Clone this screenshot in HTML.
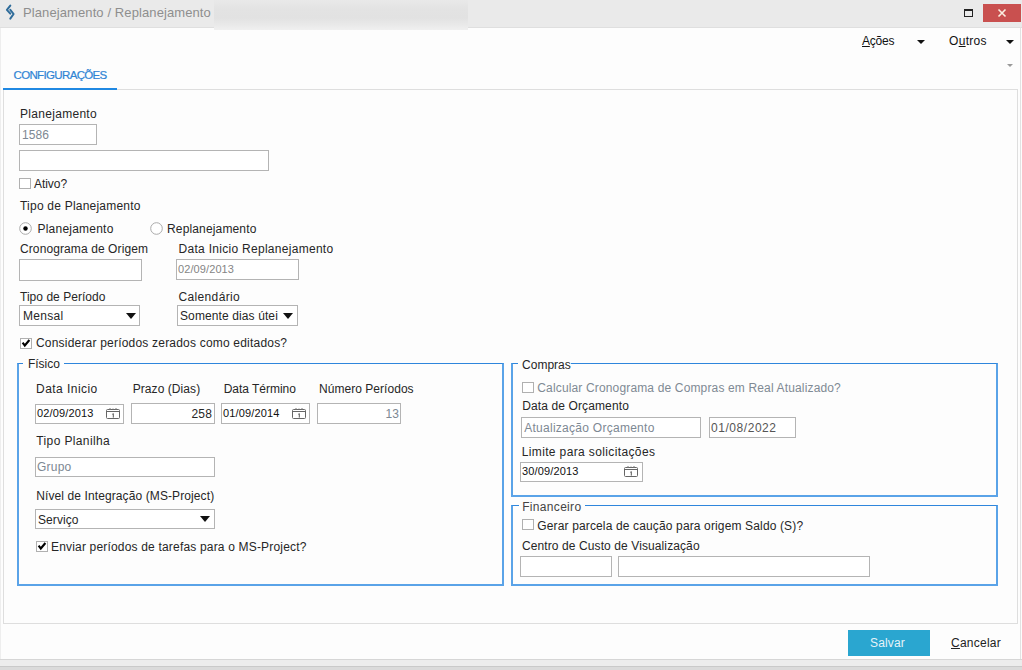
<!DOCTYPE html>
<html><head><meta charset="utf-8">
<style>
*{box-sizing:border-box;margin:0;padding:0}
html,body{width:1022px;height:670px;overflow:hidden;background:#fdfdfd;font-family:"Liberation Sans",sans-serif;font-size:12px;color:#262626}
.a{position:absolute}
.t{position:absolute;white-space:nowrap;line-height:14px}
.in{position:absolute;border:1px solid #b4b4b4;background:#fff}
.cb{position:absolute;width:12px;height:11px;border:1px solid #b0b0b0;background:#fff}
.grp{position:absolute;border:2px solid #5aa3e8;border-top:1px solid #2f86dc}
u{text-decoration:underline;text-underline-offset:1px}
</style></head><body>
<div class="a" style="left:0;top:0;width:1022px;height:28px;background:#eaeaea;border-bottom:1px solid #dfdfdf"></div>
<div class="a" style="left:214px;top:0;width:254px;height:30px;background:linear-gradient(#e9e9e9,#e3e3e3 30%,#e2e2e2 60%,#eaeaea 85%,#f0f0f0)"></div>
<svg class="a" style="left:0px;top:0px" width="20" height="24" viewBox="0 0 20 24"><path d="M10.3 5.6 L6.9 9.8 L10.3 13.6" fill="none" stroke="#2f6c9a" stroke-width="2" stroke-linecap="round" stroke-linejoin="round"/><path d="M10.3 9.8 L13.6 14 L10.3 18.6" fill="none" stroke="#2f6c9a" stroke-width="2" stroke-linecap="round" stroke-linejoin="round"/></svg>
<div class="t" style="left:23px;top:6px;font-size:13px;letter-spacing:0.1px;color:#8e8e8e;">Planejamento / Replanejamento</div>
<div class="a" style="left:964px;top:9px;width:9px;height:8px;border:1px solid #222;border-top-width:2px"></div>
<div class="a" style="left:983px;top:4px;width:38px;height:18px;background:#c9504f"></div>
<svg class="a" style="left:997px;top:8px" width="10" height="10"><path d="M1.5 1.5L8.5 8.5M8.5 1.5L1.5 8.5" stroke="#fbeee0" stroke-width="1.6"/></svg>
<div class="t" style="left:862px;top:34px;font-size:12px;letter-spacing:-0.2px;color:#111;"><u>A</u>ções</div>
<div class="a" style="left:917px;top:39.5px;width:0;height:0;border-left:4.0px solid transparent;border-right:4.0px solid transparent;border-top:4.5px solid #111"></div>
<div class="t" style="left:949px;top:34px;font-size:12px;letter-spacing:0.3px;color:#111;">O<u>u</u>tros</div>
<div class="a" style="left:1006px;top:39.5px;width:0;height:0;border-left:4.0px solid transparent;border-right:4.0px solid transparent;border-top:4.5px solid #111"></div>
<div class="a" style="left:1006.5px;top:64px;width:0;height:0;border-left:3.5px solid transparent;border-right:3.5px solid transparent;border-top:3.5px solid #999"></div>
<div class="t" style="left:13.5px;top:68.0px;font-size:11.5px;letter-spacing:-0.65px;color:#2f84d4;font-weight:normal;-webkit-text-stroke:0.2px #2f84d4;">CONFIGURAÇÕES</div>
<div class="a" style="left:3px;top:89px;width:1015px;height:535px;border:1px solid #dedede"></div>
<div class="a" style="left:3px;top:88px;width:114px;height:2px;background:#1f88e2"></div>
<div class="t" style="left:20px;top:107px;font-size:12px;letter-spacing:0.3px;">Planejamento</div>
<div class="in" style="left:19px;top:124px;width:78px;height:21px;"></div>
<div class="t" style="left:22px;top:128px;font-size:12px;letter-spacing:0.07px;color:#7d8893;">1586</div>
<div class="in" style="left:19px;top:150px;width:250px;height:21px;"></div>
<div class="cb" style="left:19px;top:178px"></div>
<div class="t" style="left:34px;top:177px;font-size:12px;letter-spacing:-0.05px;">Ativo?</div>
<div class="t" style="left:20px;top:199px;font-size:12px;letter-spacing:0.22px;">Tipo de Planejamento</div>
<svg class="a" style="left:19px;top:222px" width="13" height="13" viewBox="0 0 13 13"><circle cx="6.5" cy="6.5" r="5.8" fill="#fff" stroke="#aaa" stroke-width="1"/><circle cx="6.5" cy="6.5" r="2.2" fill="#000"/></svg>
<div class="t" style="left:37.5px;top:222px;font-size:12px;letter-spacing:0.22px;">Planejamento</div>
<svg class="a" style="left:150px;top:222px" width="13" height="13" viewBox="0 0 13 13"><circle cx="6.5" cy="6.5" r="5.8" fill="#fff" stroke="#aaa" stroke-width="1"/></svg>
<div class="t" style="left:167px;top:222px;font-size:12px;letter-spacing:0.15px;">Replanejamento</div>
<div class="t" style="left:20px;top:242px;font-size:12px;letter-spacing:0.1px;">Cronograma de Origem</div>
<div class="in" style="left:19px;top:259px;width:123px;height:22px;"></div>
<div class="t" style="left:178.5px;top:242px;font-size:12px;letter-spacing:0.29px;">Data Inicio Replanejamento</div>
<div class="in" style="left:176px;top:259px;width:123px;height:21px;"></div>
<div class="t" style="left:178px;top:261.5px;font-size:11px;letter-spacing:0.1px;color:#858585;">02/09/2013</div>
<div class="t" style="left:20px;top:290px;font-size:12px;letter-spacing:0.03px;">Tipo de Período</div>
<div class="in" style="left:19px;top:305px;width:121px;height:21px;"></div>
<div class="t" style="left:23px;top:309px;font-size:12px;letter-spacing:0.29px;">Mensal</div>
<div class="a" style="left:125.5px;top:313px;width:0;height:0;border-left:5.0px solid transparent;border-right:5.0px solid transparent;border-top:6px solid #111"></div>
<div class="t" style="left:178.5px;top:290px;font-size:12px;letter-spacing:0.35px;">Calendário</div>
<div class="in" style="left:177px;top:305px;width:121px;height:21px;"></div>
<div class="t" style="left:180px;top:309px;font-size:12px;letter-spacing:0.11px;">Somente dias útei</div>
<div class="a" style="left:283px;top:313px;width:0;height:0;border-left:5.0px solid transparent;border-right:5.0px solid transparent;border-top:6px solid #111"></div>
<div class="cb" style="left:20px;top:338px"></div><svg class="a" style="left:20px;top:338px" width="12" height="12" viewBox="0 0 12 12"><path d="M2.6 4.6 L4.8 7.5 L9.4 2.0" fill="none" stroke="#000" stroke-width="2.1"/></svg>
<div class="t" style="left:36px;top:336px;font-size:12px;letter-spacing:0.2px;">Considerar períodos zerados como editados?</div>
<div class="grp" style="left:17px;top:363px;width:487px;height:223px;"></div>
<div class="a" style="left:23px;top:362px;width:41px;height:3px;background:#fdfdfd"></div>
<div class="t" style="left:28px;top:357px;font-size:12px;letter-spacing:-0.04px;">Físico</div>
<div class="t" style="left:36px;top:381.5px;font-size:12px;letter-spacing:0.46px;">Data Inicio</div>
<div class="in" style="left:35px;top:404px;width:89px;height:20px;"></div>
<div class="t" style="left:37px;top:406px;font-size:11px;letter-spacing:0.15px;color:#111;">02/09/2013</div>
<svg class="a" style="left:106px;top:407px" width="15" height="13" viewBox="0 0 15 13"><rect x="0.5" y="2.5" width="13" height="9" rx="1" fill="#fff" stroke="#666" stroke-width="1"/><line x1="1" y1="4.5" x2="13" y2="4.5" stroke="#666" stroke-width="1"/><path d="M4 1v2M10 1v2M7 1.5v1" stroke="#777" stroke-width="1"/><path d="M6.3 7.3l1-0.7v4" fill="none" stroke="#555" stroke-width="1"/></svg>
<div class="t" style="left:132.7px;top:381.5px;font-size:12px;letter-spacing:0.07px;">Prazo (Dias)</div>
<div class="in" style="left:131px;top:403px;width:84px;height:21px;"></div>
<div class="t" style="left:191.5px;top:407px;font-size:12px;letter-spacing:0.19px;">258</div>
<div class="t" style="left:223.7px;top:381.5px;font-size:12px;letter-spacing:-0.02px;">Data Término</div>
<div class="in" style="left:221px;top:403px;width:89px;height:21px;"></div>
<div class="t" style="left:223px;top:406px;font-size:11px;letter-spacing:0.15px;color:#111;">01/09/2014</div>
<svg class="a" style="left:292px;top:406.5px" width="15" height="13" viewBox="0 0 15 13"><rect x="0.5" y="2.5" width="13" height="9" rx="1" fill="#fff" stroke="#666" stroke-width="1"/><line x1="1" y1="4.5" x2="13" y2="4.5" stroke="#666" stroke-width="1"/><path d="M4 1v2M10 1v2M7 1.5v1" stroke="#777" stroke-width="1"/><path d="M6.3 7.3l1-0.7v4" fill="none" stroke="#555" stroke-width="1"/></svg>
<div class="t" style="left:319px;top:381.5px;font-size:12px;letter-spacing:0.04px;">Número Períodos</div>
<div class="in" style="left:317px;top:403px;width:84px;height:21px;"></div>
<div class="t" style="left:385.5px;top:407px;font-size:12px;letter-spacing:0.1px;color:#7d8893;">13</div>
<div class="t" style="left:36.3px;top:433.5px;font-size:12px;letter-spacing:0.37px;">Tipo Planilha</div>
<div class="in" style="left:35px;top:457px;width:180px;height:20px;"></div>
<div class="t" style="left:37px;top:460px;font-size:12px;letter-spacing:0.21px;color:#7d8893;">Grupo</div>
<div class="t" style="left:36.3px;top:488.5px;font-size:12px;letter-spacing:0.1px;">Nível de Integração (MS-Project)</div>
<div class="in" style="left:35px;top:509px;width:180px;height:20px;"></div>
<div class="t" style="left:38px;top:513px;font-size:12px;letter-spacing:0.07px;">Serviço</div>
<div class="a" style="left:200px;top:516px;width:0;height:0;border-left:5.0px solid transparent;border-right:5.0px solid transparent;border-top:6px solid #111"></div>
<div class="cb" style="left:36px;top:541px"></div><svg class="a" style="left:36px;top:541px" width="12" height="12" viewBox="0 0 12 12"><path d="M2.6 4.6 L4.8 7.5 L9.4 2.0" fill="none" stroke="#000" stroke-width="2.1"/></svg>
<div class="t" style="left:51px;top:540px;font-size:12px;letter-spacing:0.18px;">Enviar períodos de tarefas para o MS-Project?</div>
<div class="grp" style="left:511px;top:363px;width:487px;height:134px;"></div>
<div class="a" style="left:518px;top:362px;width:53px;height:3px;background:#fdfdfd"></div>
<div class="t" style="left:522px;top:357.5px;font-size:12px;letter-spacing:0.02px;">Compras</div>
<div class="cb" style="left:522px;top:382px"></div>
<div class="t" style="left:537.3px;top:381px;font-size:12px;letter-spacing:0.15px;color:#7f8a94;">Calcular Cronograma de Compras em Real Atualizado?</div>
<div class="t" style="left:522.2px;top:399px;font-size:12px;letter-spacing:0.12px;">Data de Orçamento</div>
<div class="in" style="left:521px;top:417px;width:180px;height:21px;"></div>
<div class="t" style="left:524.2px;top:421px;font-size:12px;letter-spacing:0.27px;color:#7d8893;">Atualização Orçamento</div>
<div class="in" style="left:709px;top:417px;width:87px;height:21px;"></div>
<div class="t" style="left:711px;top:421px;font-size:12px;letter-spacing:0.55px;color:#555;">01/08/2022</div>
<div class="t" style="left:521.7px;top:445px;font-size:12px;letter-spacing:0.37px;">Limite para solicitações</div>
<div class="in" style="left:520px;top:462px;width:123px;height:20px;"></div>
<div class="t" style="left:522px;top:463.5px;font-size:11px;letter-spacing:0.15px;color:#111;">30/09/2013</div>
<svg class="a" style="left:624px;top:464.5px" width="15" height="13" viewBox="0 0 15 13"><rect x="0.5" y="2.5" width="13" height="9" rx="1" fill="#fff" stroke="#666" stroke-width="1"/><line x1="1" y1="4.5" x2="13" y2="4.5" stroke="#666" stroke-width="1"/><path d="M4 1v2M10 1v2M7 1.5v1" stroke="#777" stroke-width="1"/><path d="M6.3 7.3l1-0.7v4" fill="none" stroke="#555" stroke-width="1"/></svg>
<div class="grp" style="left:511px;top:505px;width:487px;height:81px;"></div>
<div class="a" style="left:519px;top:504px;width:66px;height:3px;background:#fdfdfd"></div>
<div class="t" style="left:522.2px;top:499.5px;font-size:12px;letter-spacing:0.32px;color:#444;">Financeiro</div>
<div class="cb" style="left:522px;top:519px"></div>
<div class="t" style="left:537.3px;top:518.5px;font-size:12px;letter-spacing:0.14px;">Gerar parcela de caução para origem Saldo (S)?</div>
<div class="t" style="left:522px;top:539px;font-size:12px;letter-spacing:0.1px;">Centro de Custo de Visualização</div>
<div class="in" style="left:520px;top:556px;width:92px;height:21px;"></div>
<div class="in" style="left:618px;top:556px;width:252px;height:21px;"></div>
<div class="a" style="left:848px;top:630px;width:82px;height:26px;background:#2aa6d0"></div>
<div class="t" style="left:870px;top:636px;font-size:12px;letter-spacing:0.16px;color:#e6f3f8;">Salvar</div>
<div class="t" style="left:951px;top:636px;font-size:12px;letter-spacing:0.25px;color:#222;"><u>C</u>ancelar</div>
<div class="a" style="left:1020px;top:28px;width:1px;height:631px;background:#e2e2e2"></div>
<div class="a" style="left:0;top:28px;width:1px;height:631px;background:#eeeeee"></div>
<div class="a" style="left:0;top:659px;width:1022px;height:7px;background:#ececec;border-top:1px solid #d6d6d6"></div>
<div class="a" style="left:0;top:666px;width:1022px;height:4px;background:#dadada;border-top:1px solid #c9c9c9"></div>
</body></html>
